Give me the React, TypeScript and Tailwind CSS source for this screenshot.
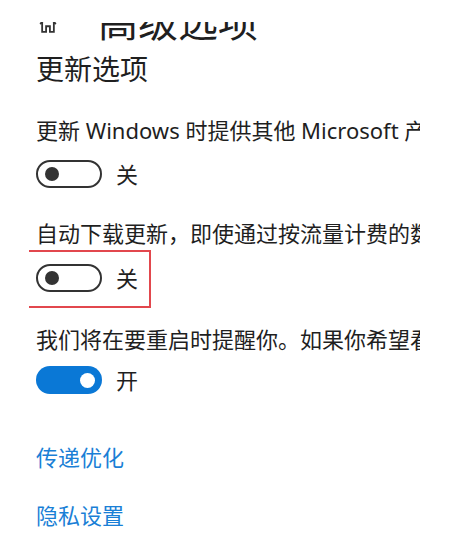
import React from "react";

const font = { fontFamily: '"Noto Sans", "Noto Sans CJK SC", sans-serif' };

const Toggle = ({ on }: { on: boolean }) =>
  on ? (
    <div className="flex h-[28px] w-[66px] items-center justify-end rounded-full bg-[#0a78d6] pr-[7px]">
      <div className="h-[15px] w-[15px] rounded-full bg-white" />
    </div>
  ) : (
    <div className="flex h-[28px] w-[66px] items-center rounded-full border-2 border-[#333333] pl-[7px]">
      <div className="h-[14px] w-[14px] rounded-full bg-[#333333]" />
    </div>
  );

const ToggleRow = ({ on }: { on: boolean }) => (
  <div className="flex items-center">
    <Toggle on={on} />
    <span className="ml-[14px] text-[22px] leading-[30px] text-[#1f1f1f]">{on ? "开" : "关"}</span>
  </div>
);

export default function App() {
  return (
    <div className="h-[548px] w-[450px] overflow-hidden bg-white" style={font}>
      <div className="pt-[22px]">
        {/* header, its upper half cut off */}
        <div className="flex h-[22px] items-start overflow-hidden">
          <svg
            className="ml-[39px] mt-[-7px] shrink-0"
            width="18"
            height="18"
            viewBox="0 0 16 16"
            fill="none"
            stroke="#333333"
            strokeWidth="1.6"
          >
            <path d="M1 8 L8 1 L15 8" />
            <path d="M2.8 6.5 V15 H6.3 V10 H9.7 V15 H13.2 V6.5" />
          </svg>
          <div className="ml-[41px] mt-[-24px] whitespace-nowrap text-[40px] leading-[48px] text-[#1f1f1f]">
            高级选项
          </div>
        </div>
      </div>

      <div className="w-[420px] overflow-hidden whitespace-nowrap pl-[36px]">
        <div className="mt-[7px] text-[28px] leading-[36px] text-[#1f1f1f]">更新选项</div>

        <div className="mt-[28px] text-[22px] leading-[30px] text-[#1f1f1f]">
          更新 Windows 时提供其他 Microsoft 产品的更新
        </div>
        <div className="mt-[14px]">
          <ToggleRow on={false} />
        </div>

        <div className="mt-[29px] text-[22px] leading-[30px] text-[#1f1f1f]">
          自动下载更新，即使通过按流量计费的数据连接也是如此
        </div>
        <div className="ml-[-7px] mt-[2px] h-[58px] w-[122px] border-y-2 border-r-2 border-[#e2474d] pl-[7px] pt-[11px]">
          <ToggleRow on={false} />
        </div>

        <div className="mt-[16px] text-[22px] leading-[30px] text-[#1f1f1f]">
          我们将在要重启时提醒你。如果你希望看到更多重启通知
        </div>
        <div className="mt-[11px]">
          <ToggleRow on={true} />
        </div>

        <div className="mt-[47px] text-[22px] leading-[30px] text-[#1a7fd6]">传递优化</div>
        <div className="mt-[28px] text-[22px] leading-[30px] text-[#1a7fd6]">隐私设置</div>
      </div>
    </div>
  );
}
